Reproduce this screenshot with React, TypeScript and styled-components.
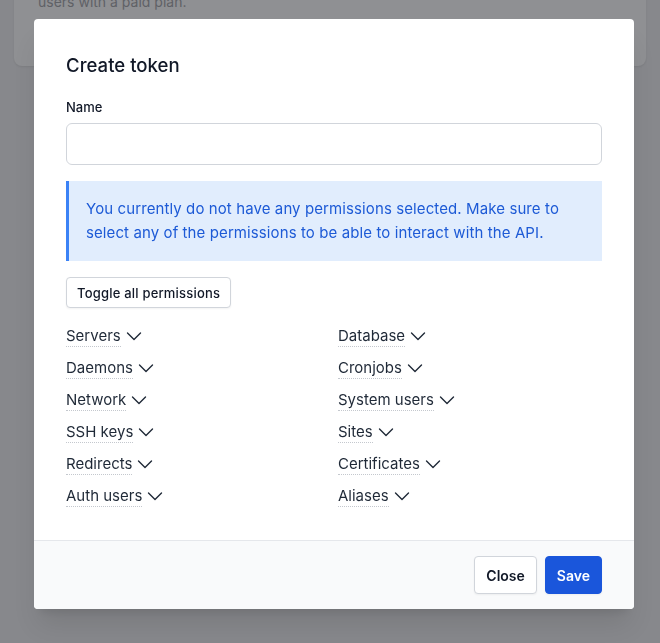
import React from "react";
import styled, { createGlobalStyle } from "styled-components";

const Global = createGlobalStyle`
  html, body { margin: 0; padding: 0; }
  body {
    background: #87888c;
    font-family: Inter, "Noto Sans", sans-serif;
    -webkit-font-smoothing: antialiased;
  }
`;

const Page = styled.div`
  min-height: 643px;
  padding: 0 14px;
`;

const BackCard = styled.div`
  margin-top: -20px;
  height: 86px;
  background: #8f9093;
  border-radius: 8px;
  box-shadow: 0 1px 2px rgba(0, 0, 0, 0.08);
  padding: 12px 24px 8px;
  box-sizing: border-box;
  color: #5f6166;
  font-size: 14px;
  line-height: 20px;
`;

const Overlay = styled.div`
  position: fixed;
  inset: 0;
  display: flex;
  align-items: flex-start;
  padding: 19px 0 0 34px;
`;

const Modal = styled.div`
  width: 600px;
  background: #ffffff;
  border-radius: 4px;
  overflow: hidden;
  box-shadow: 0 20px 25px -5px rgba(0, 0, 0, 0.1), 0 8px 10px -6px rgba(0, 0, 0, 0.1);
`;

const Body = styled.div`
  padding: 34px 32px 32px;
`;

const Title = styled.h2`
  margin: 0;
  font-size: 18.6px;
  line-height: 24px;
  font-weight: 500;
  color: #111827;
`;

const Label = styled.label`
  display: block;
  margin-top: 21px;
  font-size: 13px;
  line-height: 18px;
  font-weight: 500;
  color: #111827;
`;

const Input = styled.input`
  display: block;
  box-sizing: border-box;
  width: 100%;
  height: 42px;
  margin-top: 7px;
  border: 1px solid #d1d5db;
  border-radius: 6px;
  font-size: 15px;
  font-family: inherit;
  padding: 0 12px;
  outline: none;
`;

const Alert = styled.div`
  margin-top: 16px;
  background: #e1edfd;
  border-left: 3px solid #3b82f6;
  padding: 16px 17px;
  font-size: 15px;
  letter-spacing: 0.1px;
  line-height: 24px;
  color: #1d5ad6;
`;

const ToggleButton = styled.button`
  margin-top: 16px;
  height: 31px;
  padding: 0 10px;
  background: #ffffff;
  border: 1px solid #d1d5db;
  border-radius: 4px;
  font-family: inherit;
  font-size: 13px;
  letter-spacing: 0.2px;
  font-weight: 500;
  color: #111827;
  box-shadow: 0 1px 2px rgba(0, 0, 0, 0.05);
`;

const Grid = styled.div`
  margin-top: 16px;
  display: grid;
  grid-template-columns: 272px 1fr;
  row-gap: 8px;
`;

const Perm = styled.div`
  display: flex;
  align-items: center;
  gap: 5px;
  height: 24px;
  font-size: 15px;
  color: #1f2937;
`;

const PermLabel = styled.span`
  border-bottom: 1px dotted #c4c8ce;
  line-height: 20px;
`;

const Footer = styled.div`
  background: #f9fafb;
  border-top: 1px solid #e5e7eb;
  height: 69px;
  box-sizing: border-box;
  display: flex;
  justify-content: flex-end;
  align-items: center;
  gap: 8px;
  padding: 0 32px;
`;

const Btn = styled.button<{ $primary?: boolean }>`
  height: 38px;
  padding: 0 11px;
  border-radius: 4px;
  font-family: inherit;
  font-size: 14px;
  font-weight: 600;
  border: 1px solid ${(p) => (p.$primary ? "#1a56db" : "#d1d5db")};
  background: ${(p) => (p.$primary ? "#1a56db" : "#ffffff")};
  color: ${(p) => (p.$primary ? "#ffffff" : "#111827")};
  box-shadow: 0 1px 2px rgba(0, 0, 0, 0.05);
`;

const Chevron = () => (
  <svg width="16" height="16" viewBox="0 0 16 16" fill="none" stroke="#1f2937" strokeWidth="1.4" strokeLinecap="round" strokeLinejoin="round">
    <path d="M1.5 5 8 11.5 14.5 5" />
  </svg>
);

const perms = [
  "Servers", "Database",
  "Daemons", "Cronjobs",
  "Network", "System users",
  "SSH keys", "Sites",
  "Redirects", "Certificates",
  "Auth users", "Aliases",
];

export default function App() {
  return (
    <>
      <Global />
      <Page>
        <BackCard>users with a paid plan.</BackCard>
      </Page>
      <Overlay>
        <Modal>
          <Body>
            <Title>Create token</Title>
            <Label>Name</Label>
            <Input />
            <Alert>
              You currently do not have any permissions selected. Make sure to select any of the
              permissions to be able to interact with the API.
            </Alert>
            <ToggleButton>Toggle all permissions</ToggleButton>
            <Grid>
              {perms.map((p) => (
                <Perm key={p}>
                  <PermLabel>{p}</PermLabel>
                  <Chevron />
                </Perm>
              ))}
            </Grid>
          </Body>
          <Footer>
            <Btn>Close</Btn>
            <Btn $primary>Save</Btn>
          </Footer>
        </Modal>
      </Overlay>
    </>
  );
}
